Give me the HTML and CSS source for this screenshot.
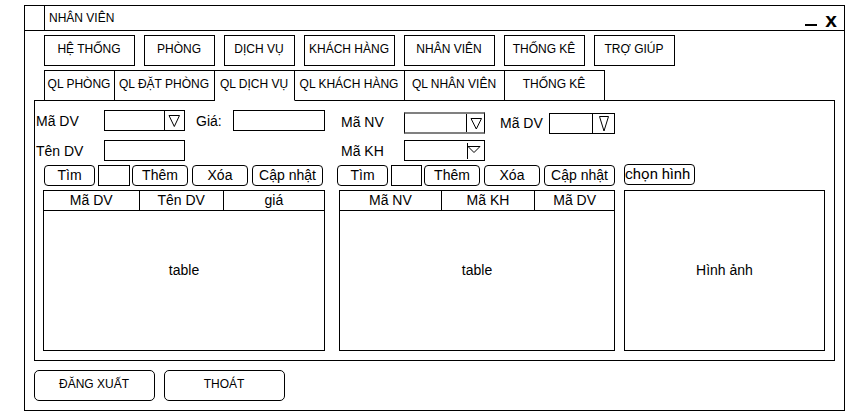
FILE: index.html
```html
<!DOCTYPE html>
<html lang="vi">
<head>
<meta charset="utf-8">
<title>NHÂN VIÊN</title>
<link rel="stylesheet" href="styles.css">
</head>
<body>
<div class="window">
  <header class="titlebar">
    <span class="titlebar-icon"></span>
    <h1 class="titlebar-text">NHÂN VIÊN</h1>
    <button class="win-btn minimize" aria-label="Thu nhỏ"><svg width="12" height="12" viewBox="0 0 12 12"><rect x="0" y="8" width="12" height="2"/></svg></button>
    <button class="win-btn close">x</button>
  </header>

  <nav class="menu">
    <button class="menu-btn wide">HỆ THỐNG</button>
    <button class="menu-btn small">PHÒNG</button>
    <button class="menu-btn small">DỊCH VỤ</button>
    <button class="menu-btn wide">KHÁCH HÀNG</button>
    <button class="menu-btn wide">NHÂN VIÊN</button>
    <button class="menu-btn">THỐNG KÊ</button>
    <button class="menu-btn">TRỢ GIÚP</button>
  </nav>

  <div class="tabs" role="tablist">
    <button class="tab tab-70" role="tab">QL PHÒNG</button>
    <button class="tab tab-100" role="tab">QL ĐẶT PHÒNG</button>
    <button class="tab tab-80 active" role="tab" aria-selected="true">QL DỊCH VỤ</button>
    <button class="tab tab-110" role="tab">QL KHÁCH HÀNG</button>
    <button class="tab tab-100" role="tab">QL NHÂN VIÊN</button>
    <button class="tab tab-100" role="tab">THỐNG KÊ</button>
  </div>

  <main class="panel">
    <section class="group services">
      <div class="fields">
        <div class="row">
          <label class="label" for="dv-code">Mã DV</label>
          <span class="combo">
            <select id="dv-code"><option></option></select>
            <svg class="arrow" width="20" height="19" viewBox="0 0 20 19"><path d="M0.5 0V19M5 4.5H15.5L10.3 15.5Z"/></svg>
          </span>
          <label class="label-price" for="dv-price">Giá:</label>
          <input class="grow" id="dv-price" type="text">
        </div>
        <div class="row">
          <label class="label" for="dv-name">Tên DV</label>
          <input class="medium" id="dv-name" type="text">
        </div>
      </div>
      <div class="toolbar">
        <button class="btn find">Tìm</button>
        <input class="grow" type="text" aria-label="Tìm dịch vụ">
        <div class="actions">
          <button class="btn">Thêm</button>
          <button class="btn">Xóa</button>
          <button class="btn update">Cập nhật</button>
        </div>
      </div>
      <table class="grid">
        <colgroup><col class="s1"><col class="s2"><col class="s3"></colgroup>
        <thead><tr><th>Mã DV</th><th>Tên DV</th><th>giá</th></tr></thead>
        <tbody><tr><td colspan="3">table</td></tr></tbody>
      </table>
    </section>

    <section class="group usage">
      <div class="fields">
        <div class="row">
          <label class="label label-top" for="nv-code">Mã NV</label>
          <span class="combo soft">
            <select id="nv-code"><option></option></select>
            <svg class="arrow" width="18" height="18" viewBox="0 0 18 18"><path d="M0.5 0V18M5 4.5H15.5L10.3 15Z"/></svg>
          </span>
          <label class="label-use" for="use-code">Mã DV</label>
          <span class="combo grow">
            <select id="use-code"><option></option></select>
            <svg class="arrow" width="22" height="19" viewBox="0 0 22 19"><path d="M0.5 0V19M7.5 2.5H16.5L12 17Z"/></svg>
          </span>
        </div>
        <div class="row">
          <label class="label" for="kh-code">Mã KH</label>
          <span class="combo">
            <select id="kh-code"><option></option></select>
            <svg class="arrow" width="17" height="19" viewBox="0 0 17 19"><path d="M0.5 2V18M1 5.5H13L7 11.5Z"/></svg>
          </span>
        </div>
      </div>
      <div class="toolbar">
        <button class="btn find">Tìm</button>
        <input class="grow" type="text" aria-label="Tìm sử dụng dịch vụ">
        <div class="actions">
          <button class="btn">Thêm</button>
          <button class="btn">Xóa</button>
          <button class="btn update">Cập nhật</button>
        </div>
      </div>
      <table class="grid">
        <colgroup><col class="u1"><col class="u2"><col class="u3"></colgroup>
        <thead><tr><th>Mã NV</th><th>Mã KH</th><th>Mã DV</th></tr></thead>
        <tbody><tr><td colspan="3">table</td></tr></tbody>
      </table>
    </section>

    <section class="group picture">
      <button class="btn choose">chọn hình</button>
      <div class="preview">Hình ảnh</div>
    </section>
  </main>

  <footer class="footer">
    <button class="footer-btn">ĐĂNG XUẤT</button>
    <button class="footer-btn">THOÁT</button>
  </footer>
</div>
</body>
</html>
```
FILE: styles.css
```css
* {
  box-sizing: border-box;
}

body {
  margin: 0;
  padding: 5px 0 1px 24px;
  background: #fff;
  color: #000;
  font: 14px/20px "Liberation Sans", Arial, sans-serif;
}

button,
input,
select {
  margin: 0;
  padding: 0;
  border: 1px solid #000;
  border-radius: 0;
  background: #fff;
  color: #000;
  font: inherit;
}

input,
select {
  height: 21px;
  min-width: 0;
}

.window {
  border: 1px solid #000;
  padding-bottom: 9px;
}

/* Title bar */
.titlebar {
  display: flex;
  height: 25px;
  border-bottom: 1px solid #000;
  padding-right: 7px;
}

.titlebar-icon {
  width: 20px;
  border-right: 1px solid #000;
}

.titlebar-text {
  flex: 1;
  margin: 0;
  padding-left: 4px;
  font-size: 12px;
  font-weight: normal;
  line-height: 24px;
}

.win-btn {
  display: flex;
  align-items: flex-end;
  justify-content: center;
  width: 12px;
  height: 22px;
  border: 0;
}

.minimize {
  margin-right: 8px;
}

.close {
  font-size: 21px;
  font-weight: bold;
  line-height: 16px;
}

/* Menu */
.menu {
  display: flex;
  gap: 9px;
  padding: 4px 19px;
}

.menu-btn,
.tab,
.footer-btn {
  padding: 0 1px 4px 0;
  font-size: 12px;
  white-space: nowrap;
}

.menu-btn {
  width: 81px;
  height: 31px;
}

.menu-btn.wide {
  width: 91px;
}

.menu-btn.small {
  width: 71px;
}

/* Tabs */
.tabs {
  position: relative;
  z-index: 1;
  display: flex;
  padding-left: 19px;
}

.tab {
  height: 31px;
  border-left-width: 0;
}

.tab:first-child {
  border-left-width: 1px;
}

.tab.active {
  border-bottom-color: #fff;
}

.tab-70 {
  width: 71px;
}

.tab-80 {
  width: 80px;
}

.tab-100 {
  width: 100px;
}

.tab-110 {
  width: 110px;
}

/* Panel */
.panel {
  display: grid;
  grid-template-columns: minmax(0, 293fr) minmax(0, 278fr) minmax(0, 201fr);
  gap: 9px;
  margin: -1px 9px 0;
  padding-right: 9px;
  padding-bottom: 9px;
  border: 1px solid #000;
}

.group {
  display: flex;
  flex-direction: column;
}

.fields {
  display: flex;
  flex-direction: column;
  gap: 9px;
  padding-top: 9px;
}

.row {
  display: flex;
}

.grow {
  flex: 1;
}

.medium {
  width: 81px;
}

.combo {
  position: relative;
  display: flex;
  width: 81px;
}

.combo select {
  width: 100%;
  appearance: none;
}

.arrow {
  position: absolute;
  top: 1px;
  right: 1px;
  fill: none;
  stroke: #000;
  pointer-events: none;
}

.services {
  padding-right: 3px;
}

.services .row {
  height: 21px;
  line-height: 22px;
}

.services .label {
  width: 69px;
  padding-left: 1px;
}

.label-price {
  width: 48px;
  padding-left: 11px;
}

.usage .fields {
  gap: 6px;
  padding-top: 11px;
}

.usage .label {
  width: 67px;
  padding-left: 4px;
}

.usage .row {
  align-items: flex-end;
}

.usage .label-top {
  align-self: flex-start;
}

.combo.soft select {
  height: 22px;
  border-width: 2px 1px;
  border-color: #808080 #000;
}

.combo.soft .arrow {
  top: 2px;
}

.label-use {
  width: 64px;
  padding-left: 15px;
  line-height: 22px;
}

/* Toolbars */
.toolbar {
  display: flex;
  gap: 2px;
  padding: 4px 0;
}

.services .toolbar {
  padding-left: 9px;
  padding-right: 2px;
}

.toolbar .find {
  width: 51px;
  margin-right: 1px;
}

.actions {
  display: flex;
  gap: 4px;
}

.btn {
  width: 56px;
  height: 21px;
  border-radius: 4px;
  line-height: 19px;
  white-space: nowrap;
}

.btn.update {
  width: 71px;
}

/* Tables */
.grid {
  height: 161px;
  border-collapse: collapse;
  table-layout: fixed;
}

.services .grid {
  margin-left: 8px;
}

.usage .grid {
  margin-left: 2px;
}

.grid th,
.grid td {
  padding: 0;
  border: 1px solid #000;
  font-weight: normal;
  text-align: center;
}

.grid th {
  height: 20px;
  line-height: 19px;
}

.s1 {
  width: 34%;
}

.s2 {
  width: 30%;
}

.s3 {
  width: 36%;
}

.u1 {
  width: 37%;
}

.u2 {
  width: 34%;
}

.u3 {
  width: 29%;
}

.grid td {
  padding-bottom: 22px;
}

/* Picture */
.picture {
  padding-top: 63px;
}

.btn.choose {
  width: 71px;
  font-family: Roboto, "Liberation Sans", sans-serif;
  font-size: 15px;
  text-align: left;
}

.preview {
  display: flex;
  flex: 1;
  align-items: center;
  justify-content: center;
  margin-top: 5px;
  padding-bottom: 2px;
  border: 1px solid #000;
}

/* Footer */
.footer {
  display: flex;
  gap: 9px;
  padding: 9px 9px 0;
}

.footer-btn {
  width: 121px;
  height: 31px;
  border-radius: 5px;
}
```
